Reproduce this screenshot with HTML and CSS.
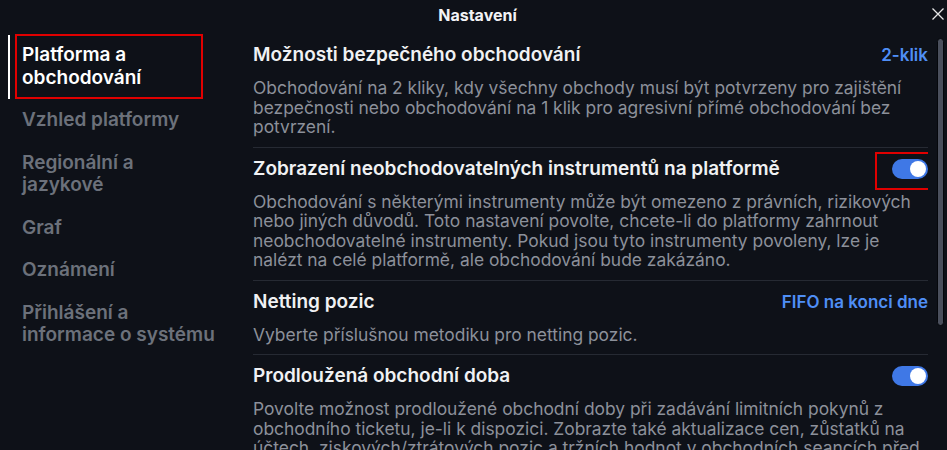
FILE: index.html
```html
<!DOCTYPE html>
<html lang="cs">
<head>
<meta charset="utf-8">
<title>Nastavení</title>
<link rel="stylesheet" href="styles.css">
</head>
<body>
<div class="dialog">
  <header class="header">
    <h1 class="title">Nastavení</h1>
    <button class="close" aria-label="Zavřít">
      <svg width="12" height="12" viewBox="0 0 12 12"><path d="M0.5 0.5 L11.5 11.5 M11.5 0.5 L0.5 11.5" stroke="#e6e6e6" stroke-width="1.3" fill="none"/></svg>
    </button>
  </header>
  <div class="main">
    <nav class="sidebar">
      <div class="nav-item active"><span class="nav-label">Platforma a obchodování</span></div>
      <div class="nav-item"><span class="nav-label">Vzhled platformy</span></div>
      <div class="nav-item"><span class="nav-label">Regionální a<br>jazykové</span></div>
      <div class="nav-item"><span class="nav-label">Graf</span></div>
      <div class="nav-item"><span class="nav-label">Oznámení</span></div>
      <div class="nav-item"><span class="nav-label">Přihlášení a<br>informace o systému</span></div>
    </nav>
    <section class="content">
      <div class="setting">
        <div class="setting-head">
          <h2 class="setting-title">Možnosti bezpečného obchodování</h2>
          <span class="setting-value">2-klik</span>
        </div>
        <p class="setting-desc">Obchodování na 2 kliky, kdy všechny obchody musí být potvrzeny pro zajištění bezpečnosti nebo obchodování na 1 klik pro agresivní přímé obchodování bez potvrzení.</p>
      </div>
      <div class="setting">
        <div class="setting-head">
          <h2 class="setting-title">Zobrazení neobchodovatelných instrumentů na platformě</h2>
          <span class="highlight"><span class="toggle on"><span class="knob"></span></span></span>
        </div>
        <p class="setting-desc">Obchodování s některými instrumenty může být omezeno z právních, rizikových nebo jiných důvodů. Toto nastavení povolte, chcete-li do platformy zahrnout neobchodovatelné instrumenty. Pokud jsou tyto instrumenty povoleny, lze je nalézt na celé platformě, ale obchodování bude zakázáno.</p>
      </div>
      <div class="setting">
        <div class="setting-head">
          <h2 class="setting-title">Netting pozic</h2>
          <span class="setting-value">FIFO na konci dne</span>
        </div>
        <p class="setting-desc">Vyberte příslušnou metodiku pro netting pozic.</p>
      </div>
      <div class="setting">
        <div class="setting-head">
          <h2 class="setting-title">Prodloužená obchodní doba</h2>
          <span class="toggle on"><span class="knob"></span></span>
        </div>
        <p class="setting-desc">Povolte možnost prodloužené obchodní doby při zadávání limitních pokynů z obchodního ticketu, je-li k dispozici. Zobrazte také aktualizace cen, zůstatků na účtech, ziskových/ztrátových pozic a tržních hodnot v obchodních seancích před otevřením a po uzavření trhu.</p>
      </div>
    </section>
    <div class="scrollbar"><div class="thumb"></div></div>
  </div>
</div>
</body>
</html>
```
FILE: styles.css
```css
* { box-sizing: border-box; }
html, body { margin: 0; padding: 0; }
body {
  background: #0e1118;
  font-family: Inter, "Noto Sans", sans-serif;
  color: #f0f1f3;
  width: 947px;
  height: 450px;
  overflow: hidden;
}
.dialog { display: flex; flex-direction: column; height: 450px; }
.header {
  position: relative;
  height: 34px;
  display: flex;
  justify-content: center;
  padding-top: 5px;
}
.title {
  margin: 0;
  font-size: 16px;
  font-weight: 700;
  line-height: 20px;
  color: #f2f3f5;
  padding-left: 8px;
}
.close {
  position: absolute;
  right: 3px;
  top: 8px;
  width: 12px;
  height: 12px;
  padding: 0;
  border: 0;
  background: none;
  display: flex;
}
.main { display: flex; flex: 1; min-height: 0; }
.sidebar {
  width: 253px;
  flex: none;
  padding-left: 8px;
  display: flex;
  flex-direction: column;
}
.nav-item {
  padding-left: 7px;
  display: flex;
}
.nav-item.active {
  border-left: 2px solid #ffffff;
  padding-left: 5px;
  margin-top: 1px;
}
.nav-label {
  display: block;
  border: 2px solid transparent;
  padding: 8px 5px;
  font-size: 19px;
  line-height: 22.5px;
  font-weight: 600;
  color: #6c717b;
}
.nav-item.active .nav-label {
  border-color: #e00000;
  color: #ffffff;
  width: 188px;
  margin-top: -1px;
}
.content {
  flex: none;
  width: 675px;
  overflow: hidden;
}
.setting {
  padding: 9px 0 10px;
  border-bottom: 1px solid #262a33;
}
.setting-head {
  display: flex;
  justify-content: space-between;
  align-items: center;
  height: 24px;
}
.setting-title {
  margin: 0;
  font-size: 19px;
  line-height: 24px;
  font-weight: 600;
  color: #f0f1f3;
}
.setting-value {
  font-size: 17px;
  font-weight: 600;
  color: #4f8ef5;
}
.setting-desc {
  margin: 11px 0 0;
  font-size: 17.4px;
  line-height: 19.5px;
  color: #8c909a;
}
.toggle {
  width: 36px;
  height: 20px;
  border-radius: 10px;
  background: #3f78e6;
  display: flex;
  align-items: center;
  justify-content: flex-end;
  padding: 2px;
}
.knob {
  width: 16px;
  height: 16px;
  border-radius: 50%;
  background: #ffffff;
}
.highlight {
  display: flex;
  border: 2px solid #e00000;
  padding: 5px 5px 9px 15px;
  margin: -7px -7px -11px -17px;
}
.scrollbar {
  flex: none;
  width: 19px;
  padding: 4px 0 0 9px;
}
.thumb {
  width: 7px;
  height: 288px;
  border-radius: 4px;
  background: #4a4f5c;
  border: 1px solid #05070b;
}
```
